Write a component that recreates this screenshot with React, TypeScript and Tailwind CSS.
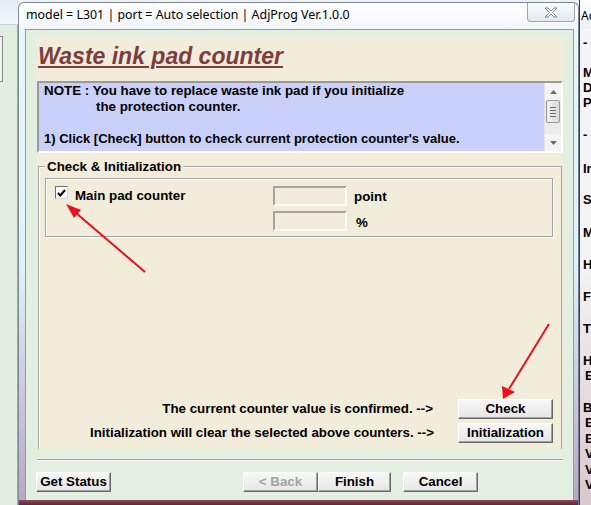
import React from "react";

const face = "font-['Liberation_Sans',Arial,sans-serif]";

function WinButton({ label, w, disabled }: { label: string; w: string; disabled?: boolean }) {
    return (
        <div
            className={`${w} h-[20px] flex items-center justify-center border border-t-white border-l-white border-b-[#696969] border-r-[#696969] bg-gradient-to-b from-[#f7f7f7] to-[#e6e6e6] shadow-[inset_-1px_-1px_0_#a0a0a0] text-[13.33px] font-bold ${disabled ? "text-[#a3a3a3]" : "text-black"}`}
        >
            {label}
        </div>
    );
}

function Arrows() {
    return (
        <svg className="absolute inset-0 pointer-events-none" width="591" height="505" viewBox="0 0 591 505">
            <line x1="145" y1="272" x2="76" y2="213" stroke="#e8121b" strokeWidth="2" />
            <polygon points="66,204 81,210 74,218" fill="#e8121b" />
            <line x1="549" y1="324" x2="509" y2="389" stroke="#e8121b" strokeWidth="2" />
            <polygon points="503,399 502,386 515,392" fill="#e8121b" />
        </svg>
    );
}

function ScrollBar() {
    return (
        <div className="w-[17px] h-full flex flex-col bg-[#ebebeb] border-l border-[#e3e3e3]">
            <div className="h-[17px] flex items-center justify-center bg-[#f4f4f4]">
                <svg width="7" height="4" viewBox="0 0 7 4"><polygon points="3.5,0 7,4 0,4" fill="#6b6b6b" /></svg>
            </div>
            <div className="h-[23px] mx-[1px] rounded-[2px] border border-[#9a9a9a] bg-gradient-to-r from-[#f3f3f3] to-[#dcdcdc] flex flex-col items-center justify-center gap-[2px]">
                <div className="w-[6px] h-px bg-[#6e6e6e]" />
                <div className="w-[6px] h-px bg-[#6e6e6e]" />
                <div className="w-[6px] h-px bg-[#6e6e6e]" />
                <div className="w-[6px] h-px bg-[#6e6e6e]" />
            </div>
            <div className="flex-1" />
            <div className="h-[17px] flex items-center justify-center bg-[#f4f4f4]">
                <svg width="7" height="4" viewBox="0 0 7 4"><polygon points="0,0 7,0 3.5,4" fill="#6b6b6b" /></svg>
            </div>
        </div>
    );
}

function SideWindow() {
    // the window peeking out on the right
    return (
        <div className="w-[12px] h-full flex flex-col bg-[#f2f3f4] border-l border-[#3d3d3d] overflow-hidden text-black">
            <div className="h-[29px] pt-[8px] pl-[1px] bg-gradient-to-b from-white to-[#eef1f5] font-['Noto_Sans',sans-serif] text-[12px] leading-[16px] whitespace-nowrap">Ad</div>
            <div className={`${face} font-bold text-[13px] leading-[15px] pl-[3px] whitespace-nowrap flex flex-col flex-1 bg-gradient-to-b from-[#f4f5f6] via-[#f2f3f4] to-[#d9c8cc]`}>
                <div className="mt-[6px]">-</div>
                <div className="mt-[15px]">M</div>
                <div>D</div>
                <div>P</div>
                <div className="mt-[17px]">-</div>
                <div className="mt-[19px]">In</div>
                <div className="mt-[16px]">S</div>
                <div className="mt-[18px]">M</div>
                <div className="mt-[17px]">H</div>
                <div className="mt-[17px]">F</div>
                <div className="mt-[17px]">T</div>
                <div className="mt-[17px]">H</div>
                <div className="pl-[2px]">E</div>
                <div className="mt-[17px]">B</div>
                <div className="pl-[2px] leading-[15.5px]">E</div>
                <div className="pl-[2px] leading-[15.5px]">E</div>
                <div className="pl-[2px] leading-[15.5px]">V</div>
                <div className="pl-[2px] leading-[15.5px]">V</div>
                <div className="pl-[2px] leading-[15.5px]">V</div>
            </div>
        </div>
    );
}

function BackWindow() {
    // edge of the window behind, on the left
    return (
        <div className="w-[18px] h-full flex flex-col">
            <div className="h-[25px] bg-gradient-to-b from-[#e4ebf3] to-[#f3f7fb] border-b border-[#c9d3dd]" />
            <div className="flex-1 bg-[#e1eee0] pt-[11px] border-r border-[#9aa7b2]">
                <div className="w-[3px] h-[46px] border border-l-0 border-[#8b8b8b] bg-[#eef3ee]" />
            </div>
        </div>
    );
}

function TextField() {
    return <div className="w-[74px] h-[20px] border-2 border-t-[#a3a3a3] border-l-[#a3a3a3] border-b-[#fbfbfb] border-r-[#fbfbfb] bg-[#f2ecda]" />;
}

export default function App() {
    return (
        <div className={`relative w-[591px] h-[505px] overflow-hidden flex bg-[#edf1f5] ${face}`}>
            <BackWindow />

            {/* dialog */}
            <div className="w-[561px] h-full pt-[2px] flex flex-col">
                <div className="h-[27px] flex items-start rounded-t-[6px] border border-b-0 border-[#7d8b98] bg-gradient-to-b from-white to-[#f2f6fa]">
                    <div className="pl-[7px] pt-[4px] font-['Noto_Sans',sans-serif] text-[12.4px] leading-[16px] text-black whitespace-nowrap">
                        model = L301 | port = Auto selection | AdjProg Ver.1.0.0
                    </div>
                    <div className="ml-auto mr-[3px] w-[48px] h-[19px] rounded-b-[4px] border border-t-0 border-[#9aa6b2] bg-gradient-to-b from-[#fbfcfd] to-[#e4e8ee] flex items-center justify-center">
                        <svg width="14" height="11" viewBox="0 0 14 11">
                            <path d="M1 1 H4 L7 4 L10 1 H13 L8.5 5.5 L13 10 H10 L7 7 L4 10 H1 L5.5 5.5 Z" fill="#fdfdfd" stroke="#7b8590" strokeWidth="1" strokeLinejoin="round" />
                        </svg>
                    </div>
                </div>

                <div className="h-[471px] flex">
                    <div className="w-[7px] border-l border-[#7d8b98] bg-gradient-to-b from-[#e9f6fc] via-[#dff2fb] to-[#b9a6c6]" />
                    <div className="w-[549px] border border-b-0 border-[#8f9ba6] bg-[#e3efe0] flex flex-col pl-[11px] pr-[10px] pt-[7px]">
                        {/* heading */}
                        <div className="h-[44px] bg-[#f2ecda] pl-[1px] pt-[6px]">
                            <span className="text-[23px] leading-[26px] font-bold italic underline decoration-[2px] underline-offset-[2px] text-[#7e3c3c]">
                                Waste ink pad counter
                            </span>
                        </div>

                        {/* note */}
                        <div className="h-[72px] flex border-2 border-t-[#9a9a9a] border-l-[#9a9a9a] border-b-white border-r-white bg-[#c9d0f9]">
                            <div className="flex-1 pl-[5px] text-[13.33px] leading-[16px] font-bold text-black whitespace-nowrap">
                                <div>NOTE : You have to replace waste ink pad if you initialize</div>
                                <div className="pl-[52px]">the protection counter.</div>
                                <div>&nbsp;</div>
                                <div className="text-[13px]">1) Click [Check] button to check current protection counter's value.</div>
                            </div>
                            <ScrollBar />
                        </div>

                        {/* counters */}
                        <div className="h-[296px] bg-[#f2ecda] px-[1px] pt-[13px] flex flex-col text-[13.33px]">
                            <div className="relative flex-1 flex flex-col border border-b-0 border-[#a6a6a6] shadow-[inset_1px_1px_0_#fff] pl-[6px] pr-[8px] pb-[6px]">
                                <div className="absolute -top-[8px] left-[6px] px-[2px] bg-[#f2ecda] leading-[15px] font-bold text-black">Check &amp; Initialization</div>
                                <div className="mt-[11px] h-[59px] flex border border-[#a6a6a6] shadow-[inset_1px_1px_0_#fff,1px_1px_0_#fff] pt-[6px]">
                                    <div className="w-[227px] flex items-start pl-[9px] pt-[1px]">
                                        <div className="w-[13px] h-[13px] border border-t-[#6f6f6f] border-l-[#6f6f6f] border-b-[#d8d8d8] border-r-[#d8d8d8] bg-white flex items-center justify-center">
                                            <svg width="9" height="8" viewBox="0 0 9 8"><path d="M1 4 L3.3 6.5 L8 1" fill="none" stroke="#000" strokeWidth="2" /></svg>
                                        </div>
                                        <div className="ml-[7px] mt-[2px] leading-[16px] font-bold text-black">Main pad counter</div>
                                    </div>
                                    <div className="flex flex-col gap-[3px]">
                                        <div className="flex items-center">
                                            <TextField />
                                            <div className="ml-[7px] pt-[2px] font-bold text-black">point</div>
                                        </div>
                                        <div className="flex items-center">
                                            <TextField />
                                            <div className="ml-[9px] pt-[3px] font-bold text-black">%</div>
                                        </div>
                                    </div>
                                </div>

                                <div className="flex-1" />

                                <div className="flex flex-col gap-[4px] font-bold text-black">
                                    <div className="flex items-center justify-end gap-[25px]">
                                        <span>The current counter value is confirmed. --&gt;</span>
                                        <WinButton label="Check" w="w-[95px]" />
                                    </div>
                                    <div className="flex items-center justify-end gap-[24px]">
                                        <span>Initialization will clear the selected above counters. --&gt;</span>
                                        <WinButton label="Initialization" w="w-[95px]" />
                                    </div>
                                </div>
                            </div>
                        </div>

                        <div className="mt-[10px] h-[2px] border-t border-[#a0a0a0] bg-white" />

                        <div className="mt-[11px] flex -ml-[1px]">
                            <WinButton label="Get Status" w="w-[75px]" />
                            <div className="ml-[132px] flex">
                                <WinButton label="< Back" w="w-[75px]" disabled />
                                <WinButton label="Finish" w="w-[73px]" />
                            </div>
                            <div className="ml-[12px]">
                                <WinButton label="Cancel" w="w-[75px]" />
                            </div>
                        </div>
                    </div>
                    <div className="w-[5px] border-r border-[#6f7d8a] bg-gradient-to-b from-[#e9f6fc] via-[#dff2fb] to-[#b9a6c6]" />
                </div>

                <div className="flex-1 border-x border-[#6f7d8a] bg-gradient-to-b from-[#8a4a5a] to-[#5a2a35]" />
            </div>

            <SideWindow />
            <Arrows />
        </div>
    );
}
